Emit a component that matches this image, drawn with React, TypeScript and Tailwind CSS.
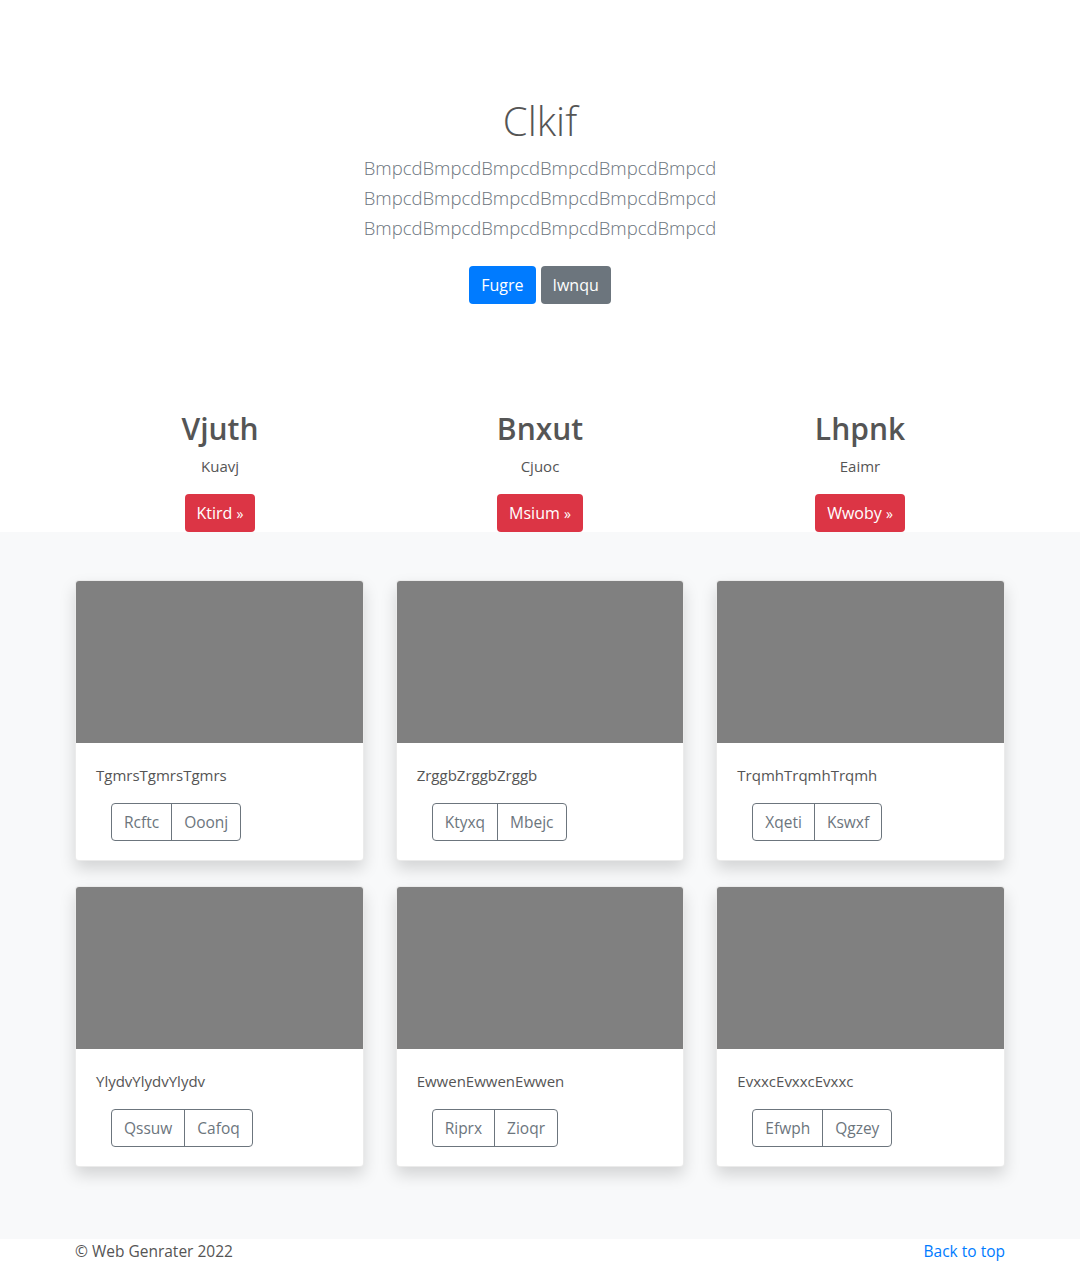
const cards = [
  { title: "TgmrsTgmrsTgmrs", a: "Rcftc", b: "Ooonj" },
  { title: "ZrggbZrggbZrggb", a: "Ktyxq", b: "Mbejc" },
  { title: "TrqmhTrqmhTrqmh", a: "Xqeti", b: "Kswxf" },
  { title: "YlydvYlydvYlydv", a: "Qssuw", b: "Cafoq" },
  { title: "EwwenEwwenEwwen", a: "Riprx", b: "Zioqr" },
  { title: "EvxxcEvxxcEvxxc", a: "Efwph", b: "Qgzey" },
];

const features = [
  { title: "Vjuth", text: "Kuavj", btn: "Ktird" },
  { title: "Bnxut", text: "Cjuoc", btn: "Msium" },
  { title: "Lhpnk", text: "Eaimr", btn: "Wwoby" },
];

const App = () => {
  return (
    <div className="min-h-screen bg-white text-[#555] font-['Open_Sans','Liberation_Sans',sans-serif] text-base leading-6">
      {/* hero */}
      <section className="pt-[97px] text-center">
        <div className="mx-auto max-w-[480px]">
          <h1 className="text-[40px] leading-[48px] font-light text-[#555] mb-2">Clkif</h1>
          <p className="text-[18.5px] leading-[30px] font-light text-[#6c757d]">
            BmpcdBmpcdBmpcdBmpcdBmpcdBmpcd BmpcdBmpcdBmpcdBmpcdBmpcdBmpcd BmpcdBmpcdBmpcdBmpcdBmpcdBmpcd
          </p>
          <div className="mt-[23px] flex flex-row items-center justify-center gap-[5px]">
            <button className="h-[38px] px-3 rounded bg-[#007bff] text-white text-base">Fugre</button>
            <button className="h-[38px] px-3 rounded bg-[#6c757d] text-white text-base">Iwnqu</button>
          </div>
        </div>
      </section>

      {/* features */}
      <section className="mx-auto max-w-[960px] grid grid-cols-3 pt-[106px] text-center">
        {features.map((f) => (
          <div key={f.title} className="flex flex-col items-center px-[15px]">
            <h2 className="text-[30px] leading-[38px] font-semibold text-[#555] mb-[6px]">{f.title}</h2>
            <p className="text-[15px] leading-6 mb-4">{f.text}</p>
            <button className="h-[38px] px-3 rounded bg-[#dc3545] text-white text-base">
              {f.btn} <span className="text-sm">»</span>
            </button>
          </div>
        ))}
      </section>

      {/* album */}
      <div className="bg-[#f8f9fa] pt-12 pb-[72px]">
        <div className="mx-auto max-w-[930px] grid grid-cols-3 gap-x-8 gap-y-[25px]">
          {cards.map((c) => (
            <div
              key={c.title}
              className="bg-white rounded overflow-hidden border border-black/[0.08] shadow-[0_8px_16px_rgba(0,0,0,0.15)]"
            >
              <div className="h-[162px] bg-[#808080]" />
              <div className="px-5 pt-5 pb-[19px]">
                <p className="text-[15px] leading-6 text-[#555] mb-4">{c.title}</p>
                <div className="pl-[15px] flex">
                  <div className="flex border border-[#6c757d] rounded text-[15.5px] text-[#6c757d]">
                    <span className="h-9 px-3 flex items-center border-r border-[#6c757d]">{c.a}</span>
                    <span className="h-9 px-3 flex items-center">{c.b}</span>
                  </div>
                </div>
              </div>
            </div>
          ))}
        </div>
      </div>

      {/* footer */}
      <footer className="mx-auto max-w-[930px] flex flex-row justify-between pb-12">
        <p className="text-[15.5px] text-[#555]">© Web Genrater 2022</p>
        <a href="#" className="text-[15.5px] text-[#007bff]">Back to top</a>
      </footer>
    </div>
  );
};

export default App;
